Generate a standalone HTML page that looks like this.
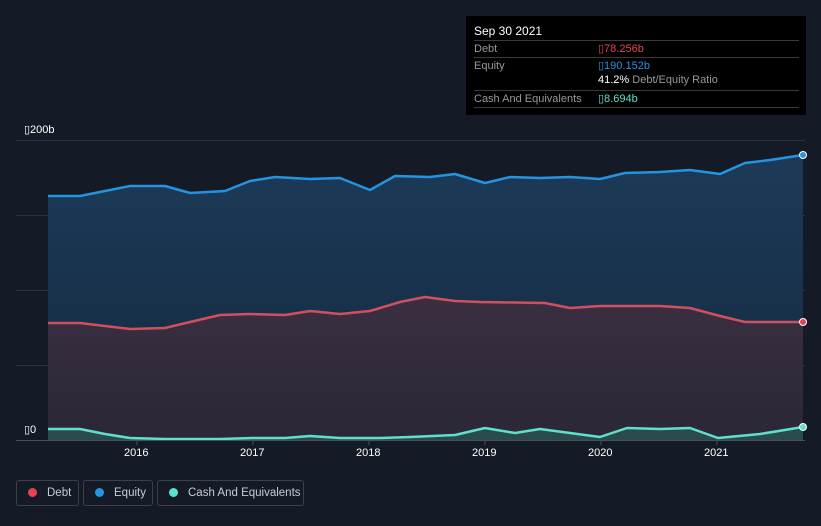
<html><head><style>
html,body{margin:0;width:821px;height:526px;overflow:hidden}
body{background:#151b26;font-family:"Liberation Sans",sans-serif;position:relative}
.tt{position:absolute;left:466px;top:16px;width:340px;height:99px;background:#000;color:#fff;font-size:11px}
.row{position:absolute;left:8px;width:325px;border-top:1px solid #3a3a3a;color:#999}
.lg{position:absolute;top:480px;height:26px;border:1px solid #3b414c;border-radius:3px;color:#c8ccd2;font-size:11.5px;line-height:25px;box-sizing:border-box;white-space:nowrap;overflow:hidden}
.lg i{display:inline-block;width:9px;height:9px;border-radius:50%;margin:0 10px 0 11px;vertical-align:-1px}
.ax{position:absolute;color:#fff;font-size:11px}
</style></head><body>
<svg width="821" height="526" style="position:absolute;left:0;top:0">
<defs>
<linearGradient id="ge" x1="0" y1="0" x2="0" y2="1"><stop offset="0" stop-color="#1c3a58"/><stop offset="1" stop-color="#142a40"/></linearGradient>
<linearGradient id="gd" x1="0" y1="0" x2="0" y2="1"><stop offset="0" stop-color="#3a2f42"/><stop offset="1" stop-color="#2a2736"/></linearGradient>
</defs>
<g stroke="#2c3340" stroke-width="1">
<line x1="16" y1="140.5" x2="805" y2="140.5"/><line x1="16" y1="215.5" x2="805" y2="215.5"/><line x1="16" y1="290.5" x2="805" y2="290.5"/><line x1="16" y1="365.5" x2="805" y2="365.5"/></g>
<polygon fill="url(#ge)" points="48,196 80,196 100,192 130,186 165,186 190,193 225,191 250,181 275,177 310,179 340,178 370,190 395,176 430,177 455,174 485,183 510,177 540,178 570,177 600,179 625,173 660,172 690,170 720,174 745,163 770,160 803,155 803,440 48,440"/>
<polygon fill="url(#gd)" points="48,323 80,323 130,329 165,328 190,322 220,315 250,314 285,315 310,311 340,314 370,311 400,302 425,297 455,301 480,302 545,303 570,308 600,306 660,306 690,308 720,316 745,322 803,322 803,440 48,440"/>
<polygon fill="#2b4a4e" points="48,429 80,429 105,434 130,438 165,439 220,439 253,438 285,438 310,436 340,438 380,438 410,437 455,435 485,428 515,433 540,429 570,433 600,437 627,428 660,429 690,428 718,438 760,434 803,427 803,440 48,440"/>
<g fill="none" stroke-width="2.5" stroke-linejoin="round">
<polyline stroke="#2394df" points="48,196 80,196 100,192 130,186 165,186 190,193 225,191 250,181 275,177 310,179 340,178 370,190 395,176 430,177 455,174 485,183 510,177 540,178 570,177 600,179 625,173 660,172 690,170 720,174 745,163 770,160 803,155"/>
<polyline stroke="#d0505e" points="48,323 80,323 130,329 165,328 190,322 220,315 250,314 285,315 310,311 340,314 370,311 400,302 425,297 455,301 480,302 545,303 570,308 600,306 660,306 690,308 720,316 745,322 803,322"/>
<polyline stroke="#5ee0cc" points="48,429 80,429 105,434 130,438 165,439 220,439 253,438 285,438 310,436 340,438 380,438 410,437 455,435 485,428 515,433 540,429 570,433 600,437 627,428 660,429 690,428 718,438 760,434 803,427"/></g>
<line x1="16" y1="440.5" x2="805" y2="440.5" stroke="#4a505a"/>
<g stroke="#4a505a"><line x1="137" y1="440" x2="137" y2="445"/><line x1="253" y1="440" x2="253" y2="445"/><line x1="369" y1="440" x2="369" y2="445"/><line x1="485" y1="440" x2="485" y2="445"/><line x1="601" y1="440" x2="601" y2="445"/><line x1="717" y1="440" x2="717" y2="445"/></g>
<circle cx="803" cy="155" r="3.5" fill="#2394df" stroke="#fff" stroke-width="1"/>
<circle cx="803" cy="322" r="3.5" fill="#e0424f" stroke="#fff" stroke-width="1"/>
<circle cx="803" cy="427" r="3.5" fill="#5ee0cc" stroke="#fff" stroke-width="1"/>
</svg>
<div class="ax" style="left:24px;top:123px">▯200b</div>
<div class="ax" style="left:24px;top:423px">▯0</div>
<div class="ax" style="left:124px;top:447px">2016</div><div class="ax" style="left:240px;top:447px">2017</div><div class="ax" style="left:356px;top:447px">2018</div><div class="ax" style="left:472px;top:447px">2019</div><div class="ax" style="left:588px;top:447px">2020</div><div class="ax" style="left:704px;top:447px">2021</div>
<div class="tt">
<div style="position:absolute;left:8px;top:8px;font-size:12px">Sep 30 2021</div>
<div class="row" style="top:24px;height:16px;line-height:16px">Debt<span style="position:absolute;left:124px;color:#e8434f">▯78.256b</span></div>
<div class="row" style="top:41px;height:16px;line-height:16px">Equity<span style="position:absolute;left:124px;color:#2394df">▯190.152b</span></div>
<div style="position:absolute;left:132px;top:58px;color:#999"><b style="color:#fff;font-weight:normal">41.2%</b> Debt/Equity Ratio</div>
<div class="row" style="top:74px;height:16px;line-height:16px">Cash And Equivalents<span style="position:absolute;left:124px;color:#5ee0cc">▯8.694b</span></div>
<div class="row" style="top:91px;height:0"></div>
</div>
<div class="lg" style="left:16px;width:63px"><i style="background:#e8434f"></i>Debt</div>
<div class="lg" style="left:83px;width:70px"><i style="background:#2394df"></i>Equity</div>
<div class="lg" style="left:157px;width:147px"><i style="background:#5ee0cc"></i>Cash And Equivalents</div>
</body></html>
